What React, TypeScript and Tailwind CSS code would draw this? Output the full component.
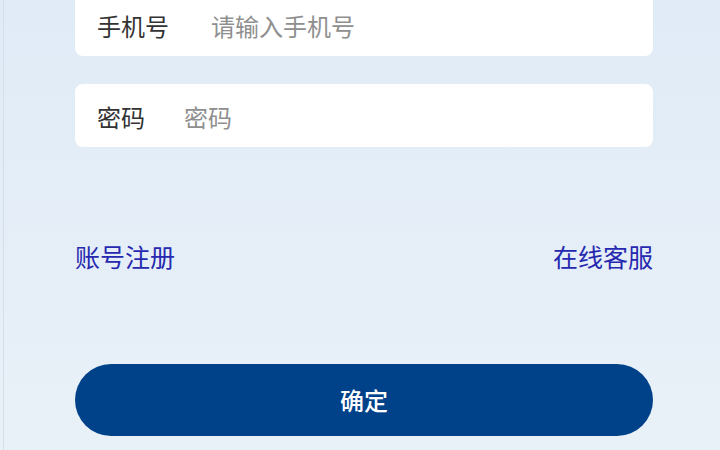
import React from "react";

export default function App() {
  return (
    <div
      className="w-[720px] h-[450px] overflow-hidden bg-gradient-to-b from-[#e0ebf7] to-[#e9f1f8] pl-[3px]"
      style={{ fontFamily: '"Noto Sans CJK SC", "Noto Sans", sans-serif' }}
    >
      <div className="h-full border-l border-[#d3e0ec] pl-[71px] pr-[66px]">
        <div className="w-[578px] flex flex-col">
          <div className="mt-[-7px] h-[63px] rounded-lg bg-white flex items-center pl-[22px] pt-[2px] text-[24px] leading-none">
            <span className="text-[#333333]">手机号</span>
            <span className="ml-[42px] text-[#8f8f8f]">请输入手机号</span>
          </div>
          <div className="mt-[28px] h-[63px] rounded-lg bg-white flex items-center pl-[22px] pt-[2px] text-[24px] leading-none">
            <span className="text-[#333333]">密码</span>
            <span className="ml-[39px] text-[#8f8f8f]">密码</span>
          </div>
          <div className="mt-[94px] h-[30px] flex items-center justify-between text-[25px] leading-none text-[#2629b0]">
            <span>账号注册</span>
            <span>在线客服</span>
          </div>
          <button className="mt-[93px] h-[72px] w-full rounded-full bg-[#00428a] text-white text-[24px] font-medium flex items-center justify-center">
            确定
          </button>
        </div>
      </div>
    </div>
  );
}
